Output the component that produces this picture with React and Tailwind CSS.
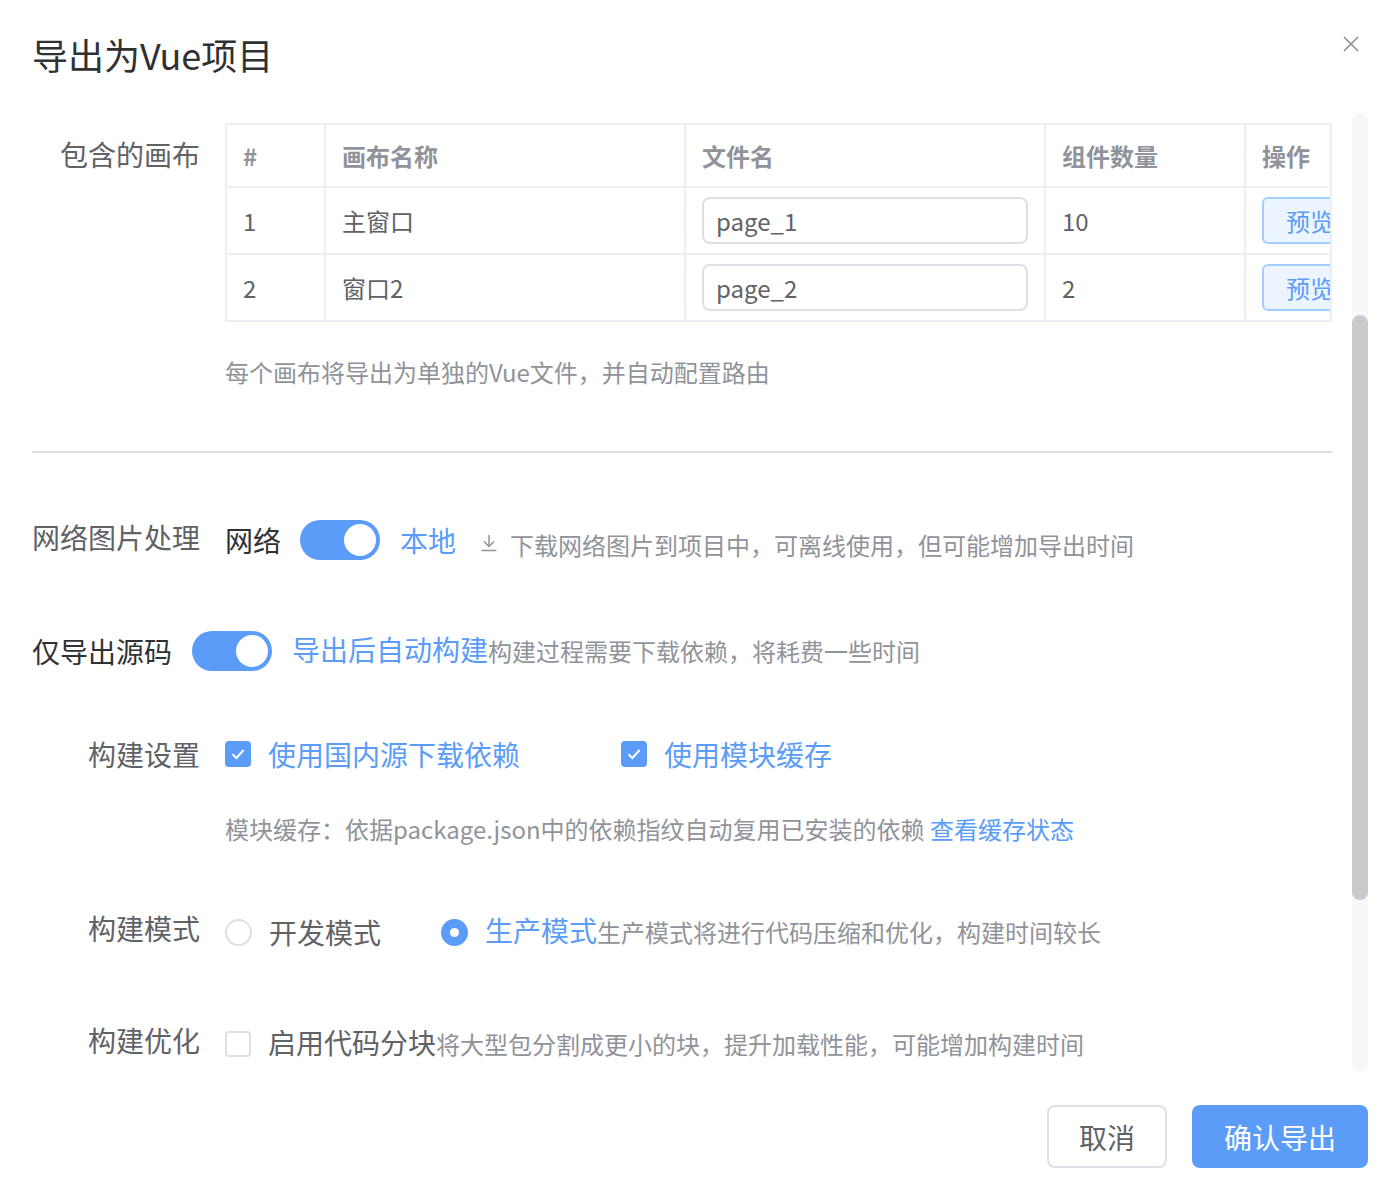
import { X } from "lucide-react";

const BLUE = "text-[#5a9cf8]";

const Switch = () => (
  <div className="flex items-center justify-end w-[80px] h-[40px] rounded-full bg-[#5a9cf8] px-[4px] shrink-0">
    <div className="w-[32px] h-[32px] rounded-full bg-white" />
  </div>
);

const Checkbox = ({ checked }) =>
  checked ? (
    <div className="w-[26px] h-[26px] rounded-[4px] bg-[#5a9cf8] flex items-center justify-center shrink-0">
      <svg width="20" height="20" viewBox="0 0 20 20" fill="none">
        <path d="M4.5 10.2 L8.4 14 L15.6 6" stroke="white" strokeWidth="2" />
      </svg>
    </div>
  ) : (
    <div className="w-[26px] h-[26px] rounded-[4px] border-2 border-[#dcdfe6] bg-white shrink-0" />
  );

const Radio = ({ checked }) =>
  checked ? (
    <div className="w-[27px] h-[27px] rounded-full bg-[#5a9cf8] flex items-center justify-center shrink-0">
      <div className="w-[9px] h-[9px] rounded-full bg-white" />
    </div>
  ) : (
    <div className="w-[27px] h-[27px] rounded-full border-2 border-[#dcdfe6] bg-white shrink-0" />
  );

const Label = ({ children, className = "" }) => (
  <div className={`w-[168px] shrink-0 text-right text-[28px] text-[#606266] ${className}`}>
    {children}
  </div>
);

const canvases = [
  { id: 1, name: "主窗口", file: "page_1", count: 10 },
  { id: 2, name: "窗口2", file: "page_2", count: 2 },
];

export default function App() {
  return (
    <div className="relative w-full h-[1196px] bg-white overflow-hidden font-['Noto_Sans_CJK_SC','Noto_Sans',sans-serif]">
      {/* header */}
      <div className="px-8 pt-[30px] h-[113px]">
        <h1 className="text-[36px] leading-[48px] text-[#303133]">导出为Vue项目</h1>
      </div>
      <button className="absolute top-[31px] right-[36px] text-[#909399]">
        <X size={26} strokeWidth={1.6} />
      </button>

      {/* body */}
      <div className="flex pl-8 h-[959px]">
        <div className="w-[1300px] overflow-hidden">
          {/* canvases table */}
          <div className="flex mt-[10px]">
            <Label className="leading-[62px]">包含的画布</Label>
            <div className="ml-[25px] w-[1107px] overflow-hidden border-2 border-[#ebeef5] border-b-0">
              <table className="table-fixed border-collapse w-[1400px] text-[24px]">
                <colgroup>
                  <col className="w-[98px]" />
                  <col className="w-[360px]" />
                  <col className="w-[360px]" />
                  <col className="w-[200px]" />
                  <col className="w-[382px]" />
                </colgroup>
                <thead>
                  <tr className="h-[62px] text-[#909399] font-bold text-left">
                    <th className="px-4 border-r-2 border-b-2 border-[#ebeef5]">#</th>
                    <th className="px-4 border-r-2 border-b-2 border-[#ebeef5]">画布名称</th>
                    <th className="px-4 border-r-2 border-b-2 border-[#ebeef5]">文件名</th>
                    <th className="px-4 border-r-2 border-b-2 border-[#ebeef5]">组件数量</th>
                    <th className="px-4 border-b-2 border-[#ebeef5]">操作</th>
                  </tr>
                </thead>
                <tbody className="text-[#606266]">
                  {canvases.map((c) => (
                    <tr key={c.id} className="h-[67px]">
                      <td className="px-4 border-r-2 border-b-2 border-[#ebeef5]">{c.id}</td>
                      <td className="px-4 border-r-2 border-b-2 border-[#ebeef5]">{c.name}</td>
                      <td className="px-4 border-r-2 border-b-2 border-[#ebeef5]">
                        <div className="h-[47px] rounded-[8px] border-2 border-[#dcdfe6] px-[12px] flex items-center text-[#606266]">
                          {c.file}
                        </div>
                      </td>
                      <td className="px-4 border-r-2 border-b-2 border-[#ebeef5]">{c.count}</td>
                      <td className="px-4 border-b-2 border-[#ebeef5]">
                        <button className="h-[47px] w-[96px] rounded-[6px] border-2 border-[#a0cfff] bg-[#ecf5ff] text-[#5a9cf8] text-left pl-[22px]">
                          预览
                        </button>
                      </td>
                    </tr>
                  ))}
                </tbody>
              </table>
            </div>
          </div>
          <p className="ml-[193px] mt-[32px] text-[24px] leading-[36px] text-[#909399]">
            每个画布将导出为单独的Vue文件，并自动配置路由
          </p>

          <div className="mt-[61px] h-[2px] bg-[#dcdfe6]" />

          {/* network images */}
          <div className="flex items-center h-[40px] mt-[67px]">
            <Label className="-mt-[6px]">网络图片处理</Label>
            <span className="ml-[25px] text-[28px] text-[#303133]">网络</span>
            <div className="ml-[19px]">
              <Switch />
            </div>
            <span className={`ml-[20px] text-[28px] ${BLUE}`}>本地</span>
            <svg className="ml-[23px] mt-[6px]" width="20" height="20" viewBox="0 0 20 20" fill="none" stroke="#909399" strokeWidth="1.5">
              <path d="M10 2 V13" />
              <path d="M5 8.5 L10 13.5 L15 8.5" />
              <path d="M2.5 17.5 H17.5" />
            </svg>
            <span className="ml-[11px] mt-[10px] text-[24px] text-[#909399]">
              下载网络图片到项目中，可离线使用，但可能增加导出时间
            </span>
          </div>

          {/* source only */}
          <div className="flex items-center h-[40px] mt-[71px]">
            <span className="text-[28px] text-[#303133] w-[140px] shrink-0">仅导出源码</span>
            <div className="ml-[20px]">
              <Switch />
            </div>
            <span className="ml-[20px] leading-[40px]">
              <span className={`text-[28px] ${BLUE}`}>导出后自动构建</span>
              <span className="text-[24px] text-[#909399]">构建过程需要下载依赖，将耗费一些时间</span>
            </span>
          </div>

          {/* build settings */}
          <div className="flex items-center h-[40px] mt-[63px]">
            <Label>构建设置</Label>
            <div className="ml-[25px] flex items-center">
              <Checkbox checked />
              <span className={`ml-[17px] text-[28px] ${BLUE}`}>使用国内源下载依赖</span>
            </div>
            <div className="ml-[101px] flex items-center">
              <Checkbox checked />
              <span className={`ml-[17px] text-[28px] ${BLUE}`}>使用模块缓存</span>
            </div>
          </div>
          <p className="ml-[193px] mt-[37px] text-[24px] leading-[36px] text-[#909399]">
            模块缓存：依据package.json中的依赖指纹自动复用已安装的依赖{" "}
            <span className={BLUE}>查看缓存状态</span>
          </p>

          {/* build mode */}
          <div className="flex items-center h-[40px] mt-[65px]">
            <Label className="-mt-[8px]">构建模式</Label>
            <div className="ml-[25px] flex items-center">
              <Radio />
              <span className="ml-[17px] text-[28px] text-[#606266]">开发模式</span>
            </div>
            <div className="ml-[60px] flex items-center">
              <Radio checked />
              <span className="ml-[17px] leading-[40px]">
                <span className={`text-[28px] ${BLUE}`}>生产模式</span>
                <span className="text-[24px] text-[#909399]">生产模式将进行代码压缩和优化，构建时间较长</span>
              </span>
            </div>
          </div>

          {/* build optimization */}
          <div className="flex items-center h-[40px] mt-[72px]">
            <Label className="-mt-[8px]">构建优化</Label>
            <div className="ml-[25px] flex items-center">
              <Checkbox />
              <span className="ml-[17px] leading-[40px]">
                <span className="text-[28px] text-[#606266]">启用代码分块</span>
                <span className="text-[24px] text-[#909399]">将大型包分割成更小的块，提升加载性能，可能增加构建时间</span>
              </span>
            </div>
          </div>
        </div>

        {/* scrollbar */}
        <div className="ml-[20px] w-4 h-full rounded-full bg-[#f8f8f9]">
          <div className="mt-[202px] h-[585px] rounded-full bg-[#c9cad0]" />
        </div>
      </div>

      {/* footer */}
      <div className="flex justify-end gap-[25px] pr-8 pt-[33px]">
        <button className="w-[120px] h-[63px] rounded-[8px] border-2 border-[#dcdfe6] bg-white text-[28px] text-[#606266]">
          取消
        </button>
        <button className="w-[176px] h-[63px] rounded-[8px] bg-[#5a9cf8] text-[28px] text-white">
          确认导出
        </button>
      </div>
    </div>
  );
}
